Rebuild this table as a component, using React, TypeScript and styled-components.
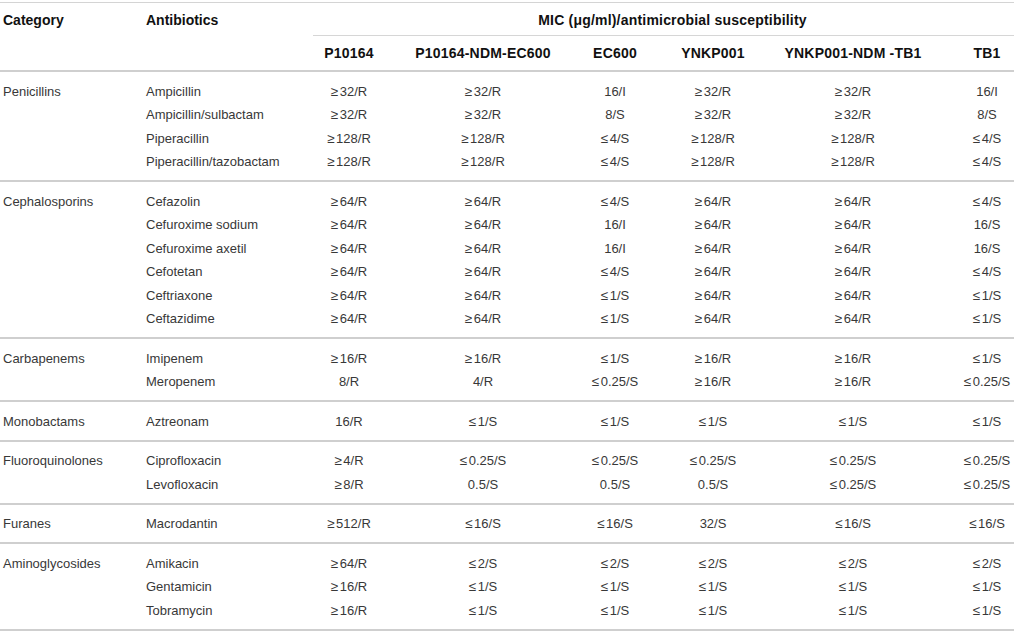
import React from "react";
import styled, { createGlobalStyle } from "styled-components";

const GlobalStyle = createGlobalStyle`
  html, body {
    margin: 0;
    padding: 0;
    background: #ffffff;
  }
  body {
    font-family: "Liberation Sans", Arial, Helvetica, sans-serif;
    font-size: 13px;
    color: #383838;
  }
`;

const COLUMNS = "143px 170px 72px 196px 68px 128px 152px 85px";

const Table = styled.div`
  width: 1014px;
  margin-top: 2px;
  border-top: 1px solid #d4d4d4;
`;

const Header = styled.div`
  display: grid;
  grid-template-columns: ${COLUMNS};
  grid-template-rows: 33px 34px;
  border-bottom: 2px solid #cfcfcf;
  font-weight: 700;
  font-size: 14px;
  letter-spacing: 0.2px;
  color: #111111;
`;

const HeadLabel = styled.div<{ $col: number }>`
  grid-column: ${(p) => p.$col};
  grid-row: 1;
  display: flex;
  align-items: center;
  padding-left: 3px;
  padding-top: 1px;
  letter-spacing: 0;
`;

const SpanHead = styled.div`
  grid-column: 3 / span 6;
  grid-row: 1;
  display: flex;
  align-items: center;
  justify-content: center;
  padding-left: 18px;
  padding-top: 1px;
  border-bottom: 1px solid #d6d6d6;
`;

const StrainHead = styled.div<{ $last?: boolean }>`
  grid-row: 2;
  display: flex;
  align-items: center;
  justify-content: center;
  padding-left: ${(p) => (p.$last ? "31px" : "0")};
  padding-bottom: 1px;
  white-space: nowrap;
`;

const Group = styled.div`
  display: grid;
  grid-template-columns: ${COLUMNS};
  grid-auto-rows: 23.5px;
  padding: 7.5px 0 6.5px;
  border-bottom: 2px solid #cfcfcf;
`;

const TextCell = styled.div`
  line-height: 23.5px;
  padding-left: 3px;
  white-space: nowrap;
`;

const ValueCell = styled.div<{ $last?: boolean }>`
  line-height: 23.5px;
  text-align: center;
  white-space: nowrap;
  padding-left: ${(p) => (p.$last ? "31px" : "0")};
`;

const Rel = styled.span`
  margin-right: 1.5px;
  font-size: 13.5px;
`;

const strains = [
  "P10164",
  "P10164-NDM-EC600",
  "EC600",
  "YNKP001",
  "YNKP001-NDM -TB1",
  "TB1",
];

type Row = [string, string[]];
type GroupData = { category: string; rows: Row[] };

const R32 = "≥32/R";
const R128 = "≥128/R";
const R64 = "≥64/R";
const R16 = "≥16/R";

const data: GroupData[] = [
  {
    category: "Penicillins",
    rows: [
      ["Ampicillin", [R32, R32, "16/I", R32, R32, "16/I"]],
      ["Ampicillin/sulbactam", [R32, R32, "8/S", R32, R32, "8/S"]],
      ["Piperacillin", [R128, R128, "≤4/S", R128, R128, "≤4/S"]],
      ["Piperacillin/tazobactam", [R128, R128, "≤4/S", R128, R128, "≤4/S"]],
    ],
  },
  {
    category: "Cephalosporins",
    rows: [
      ["Cefazolin", [R64, R64, "≤4/S", R64, R64, "≤4/S"]],
      ["Cefuroxime sodium", [R64, R64, "16/I", R64, R64, "16/S"]],
      ["Cefuroxime axetil", [R64, R64, "16/I", R64, R64, "16/S"]],
      ["Cefotetan", [R64, R64, "≤4/S", R64, R64, "≤4/S"]],
      ["Ceftriaxone", [R64, R64, "≤1/S", R64, R64, "≤1/S"]],
      ["Ceftazidime", [R64, R64, "≤1/S", R64, R64, "≤1/S"]],
    ],
  },
  {
    category: "Carbapenems",
    rows: [
      ["Imipenem", [R16, R16, "≤1/S", R16, R16, "≤1/S"]],
      ["Meropenem", ["8/R", "4/R", "≤0.25/S", R16, R16, "≤0.25/S"]],
    ],
  },
  {
    category: "Monobactams",
    rows: [["Aztreonam", ["16/R", "≤1/S", "≤1/S", "≤1/S", "≤1/S", "≤1/S"]]],
  },
  {
    category: "Fluoroquinolones",
    rows: [
      ["Ciprofloxacin", ["≥4/R", "≤0.25/S", "≤0.25/S", "≤0.25/S", "≤0.25/S", "≤0.25/S"]],
      ["Levofloxacin", ["≥8/R", "0.5/S", "0.5/S", "0.5/S", "≤0.25/S", "≤0.25/S"]],
    ],
  },
  {
    category: "Furanes",
    rows: [["Macrodantin", ["≥512/R", "≤16/S", "≤16/S", "32/S", "≤16/S", "≤16/S"]]],
  },
  {
    category: "Aminoglycosides",
    rows: [
      ["Amikacin", ["≥64/R", "≤2/S", "≤2/S", "≤2/S", "≤2/S", "≤2/S"]],
      ["Gentamicin", [R16, "≤1/S", "≤1/S", "≤1/S", "≤1/S", "≤1/S"]],
      ["Tobramycin", [R16, "≤1/S", "≤1/S", "≤1/S", "≤1/S", "≤1/S"]],
    ],
  },
];

function Value({ text }: { text: string }) {
  const first = text.charAt(0);
  if (first === "≥" || first === "≤") {
    return (
      <>
        <Rel>{first}</Rel>
        {text.slice(1)}
      </>
    );
  }
  return <>{text}</>;
}

export default function App() {
  return (
    <>
      <GlobalStyle />
      <Table>
        <Header>
          <HeadLabel $col={1}>Category</HeadLabel>
          <HeadLabel $col={2}>Antibiotics</HeadLabel>
          <SpanHead>MIC (μg/ml)/antimicrobial susceptibility</SpanHead>
          {strains.map((s, i) => (
            <StrainHead key={s} $last={i === strains.length - 1} style={{ gridColumn: i + 3 }}>
              {s}
            </StrainHead>
          ))}
        </Header>
        {data.map((g) => (
          <Group key={g.category}>
            {g.rows.map(([name, values], ri) => (
              <React.Fragment key={name}>
                <TextCell>{ri === 0 ? g.category : ""}</TextCell>
                <TextCell>{name}</TextCell>
                {values.map((v, vi) => (
                  <ValueCell key={vi} $last={vi === values.length - 1}>
                    <Value text={v} />
                  </ValueCell>
                ))}
              </React.Fragment>
            ))}
          </Group>
        ))}
      </Table>
    </>
  );
}
